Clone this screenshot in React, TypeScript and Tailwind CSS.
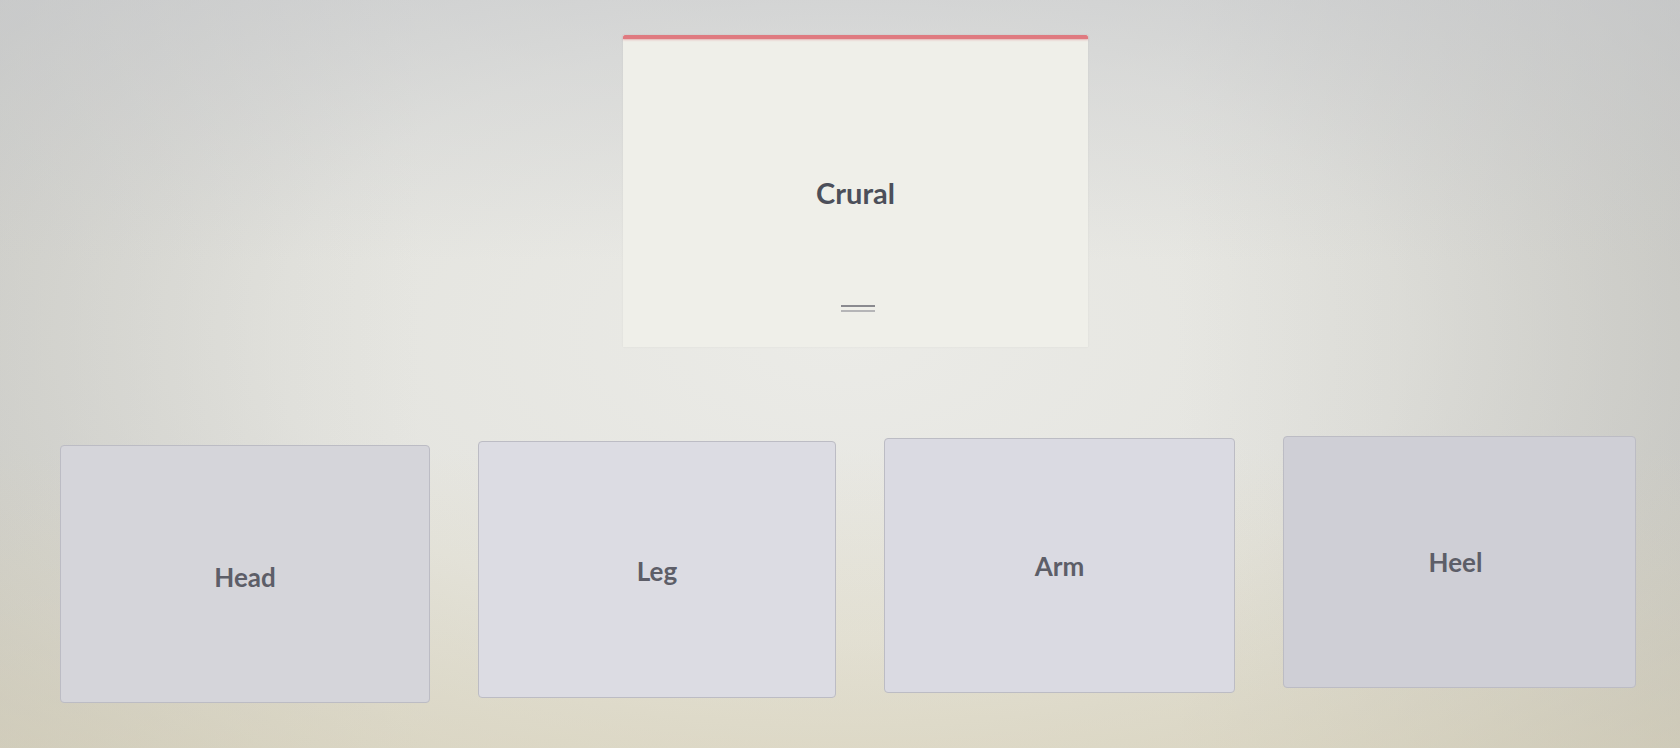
const options = [
  { label: "Head", tint: "bg-[#d5d5da]", size: "w-[370px] mt-[5px] h-[258px]", text: "mt-[6px]" },
  { label: "Leg", tint: "bg-[#dcdce3]", size: "w-[358px] mt-[1px] h-[257px]", text: "mt-[3px]" },
  { label: "Arm", tint: "bg-[#dadae2]", size: "w-[351px] -mt-[2px] h-[255px]", text: "mt-[0px]" },
  { label: "Heel", tint: "bg-[#cfcfd6]", size: "w-[353px] -mt-[4px] h-[252px]", text: "mt-[0px] -ml-[8px]" },
];

function DragHandle() {
  return (
    <svg width="34" height="12" viewBox="0 0 34 12" fill="none">
      <line x1="0" y1="3" x2="34" y2="3" stroke="#8a8a8f" strokeWidth="1.8" />
      <line x1="0" y1="8" x2="34" y2="8" stroke="#a2a2a6" strokeWidth="1.5" />
    </svg>
  );
}

function PromptCard({ label }: { label: string }) {
  return (
    <div className="w-[465px] h-[312px] flex flex-col bg-[#efefe9] shadow-[0_0_2px_rgba(0,0,0,0.06)]">
      <div className="h-[4px] bg-[#df7a80] rounded-t-[2px] shadow-[0_1px_2px_rgba(222,122,130,0.5)]" />
      <div className="flex-1 flex flex-col items-center">
        <div className="mt-[139px] text-[29px] font-bold text-[#4c4f5a] leading-none">{label}</div>
        <div className="mt-[96px] ml-[4px]">
          <DragHandle />
        </div>
      </div>
    </div>
  );
}

function OptionCard({ label, tint, size, text }: { label: string; tint: string; size: string; text: string }) {
  return (
    <div
      className={`flex items-center justify-center rounded-[4px] border border-[#bcbcc4] ${tint} ${size}`}
    >
      <span className={`text-[26px] font-bold text-[#5d5e68] leading-none ${text}`}>{label}</span>
    </div>
  );
}

export default function App() {
  return (
    <div
      className="w-[1680px] h-[748px] overflow-hidden flex flex-col bg-[linear-gradient(180deg,rgba(200,202,206,0.55)_0%,rgba(0,0,0,0)_35%,rgba(0,0,0,0)_60%,rgba(222,212,178,0.45)_100%),linear-gradient(90deg,rgba(190,190,186,0.35)_0%,rgba(0,0,0,0)_25%,rgba(0,0,0,0)_70%,rgba(180,180,176,0.4)_100%),radial-gradient(ellipse_75%_90%_at_50%_45%,#ebebe7_0%,#e4e4df_45%,#d6d6d1_75%,#c4c4c0_100%)]"
      style={{ fontFamily: "Lato, 'Open Sans', sans-serif" }}
    >
      <div className="flex justify-center pl-[31px] pt-[35px]">
        <PromptCard label="Crural" />
      </div>
      <div className="flex items-start gap-[48px] pl-[60px] mt-[93px]">
        {options.map((o) => (
          <OptionCard key={o.label} {...o} />
        ))}
      </div>
    </div>
  );
}
